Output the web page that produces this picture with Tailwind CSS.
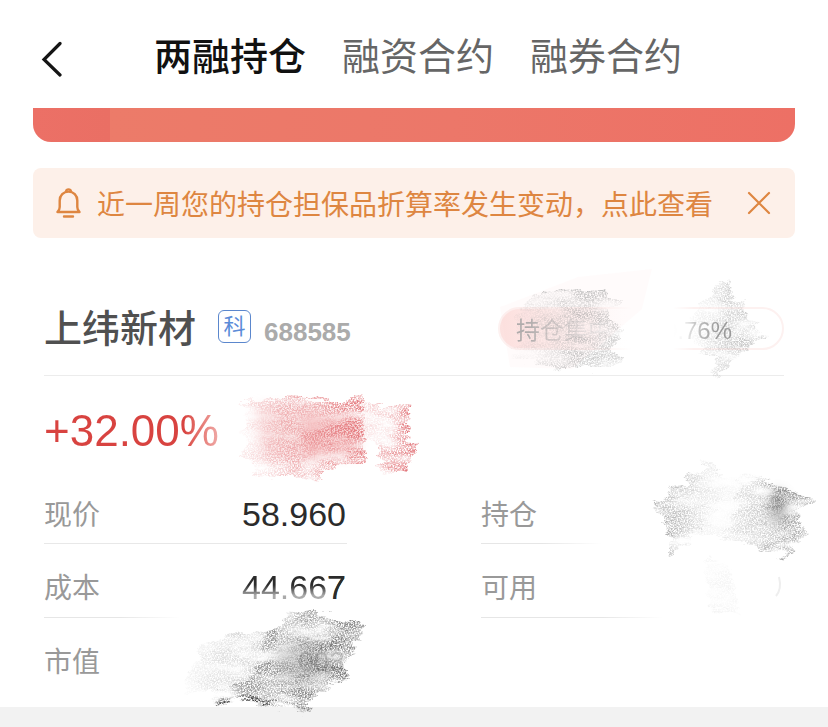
<!DOCTYPE html>
<html lang="zh-CN">
  <head>
    <meta charset="UTF-8" />
    <meta name="viewport" content="width=device-width, initial-scale=1.0" />
    <title>两融持仓</title>
    <script src="https://cdn.jsdelivr.net/npm/@tailwindcss/browser@4"></script>
  </head>
  <body
    class="min-h-screen overflow-x-hidden bg-[#f2f2f2] font-['Liberation_Sans','Noto_Sans_CJK_SC',sans-serif]"
  >
    <!-- Shared pencil texture filters -->
    <svg class="absolute h-0 w-0" aria-hidden="true">
      <defs>
        <filter id="pencil" x="-10%" y="-10%" width="120%" height="120%" color-interpolation-filters="sRGB">
          <feTurbulence type="fractalNoise" baseFrequency="0.04 0.14" numOctaves="3" seed="4" result="wave" />
          <feDisplacementMap in="SourceGraphic" in2="wave" scale="18" xChannelSelector="R" yChannelSelector="A" result="rough" />
          <feTurbulence type="fractalNoise" baseFrequency="0.7" numOctaves="2" seed="9" />
          <feColorMatrix values="0 0 0 0 0  0 0 0 0 0  0 0 0 0 0  3 0 0 0 -0.95" result="grain" />
          <feTurbulence type="fractalNoise" baseFrequency="0.03 0.08" numOctaves="3" seed="21" />
          <feColorMatrix values="0 0 0 0 0  0 0 0 0 0  0 0 0 0 0  0 2.2 0 0 -0.4" result="streak" />
          <feComposite in="rough" in2="grain" operator="in" result="dots" />
          <feComposite in="dots" in2="streak" operator="in" />
        </filter>
        <filter id="soft" x="-60%" y="-60%" width="220%" height="220%">
          <feGaussianBlur stdDeviation="6" />
        </filter>
      </defs>
    </svg>

    <main class="bg-white pb-[15px]">
      <!-- Header -->
      <header class="flex h-[108px] items-center pt-1.5 pl-[41px]">
        <button type="button" aria-label="返回" class="mt-1 shrink-0">
          <svg class="h-9 w-[22px]" viewBox="0 0 22 36" fill="none" stroke="#151515" stroke-width="3.200" stroke-linecap="round">
            <path d="M19 2.500 3 18.500 19 34" />
          </svg>
        </button>
        <nav class="ml-[91px] flex gap-9 text-[38px] leading-[50px] whitespace-nowrap text-[#666]">
          <a href="#" class="font-medium text-[#111]">两融持仓</a>
          <a href="#">融资合约</a>
          <a href="#">融券合约</a>
        </nav>
      </header>

      <!-- Bottom edge of the account card -->
      <div class="mx-[33px] flex h-[34px] overflow-hidden rounded-b-[18px]">
        <div class="w-[77px] bg-linear-to-r from-[#ec7066] to-[#ea6f64]"></div>
        <div class="flex-1 bg-linear-to-r from-[#ec7b69] via-[#ec7769] to-[#ed7065]"></div>
      </div>

      <!-- Notice -->
      <div class="mx-[33px] mt-[26px] flex h-[70px] items-center rounded-lg bg-[#fdf0e9] pr-6 pl-[23px] text-[#de8641]">
        <svg class="h-[30px] w-[26px] shrink-0" viewBox="0 0 26 30" fill="none" stroke="currentColor" stroke-width="2.400" stroke-linecap="round" stroke-linejoin="round">
          <path d="M1.500 24h22c-1.600-1.300-2.200-3-2.200-5v-6.500C21.300 7.300 17.500 3.600 12.500 3.600S3.700 7.300 3.700 12.500V19c0 2-.6 3.700-2.200 5Z" />
          <path d="M10.100 3.200c.4-2.400 4.400-2.400 4.800 0M8 28.500h9" />
        </svg>
        <a href="#" class="ml-[15px] pt-1.5 text-[28px] leading-10 whitespace-nowrap">近一周您的持仓担保品折算率发生变动，点此查看</a>
        <button type="button" aria-label="关闭" class="ml-auto">
          <svg class="size-6" viewBox="0 0 24 24" fill="none" stroke="currentColor" stroke-width="2.200" stroke-linecap="round">
            <path d="M2 2l20 20M22 2 2 22" />
          </svg>
        </button>
      </div>

      <section class="px-11">
        <!-- Stock title -->
        <div class="relative mt-11 flex h-[94px] items-center border-b border-[#ececec]">
          <h1 class="text-[38px] leading-[50px] font-medium whitespace-nowrap text-[#505050]">上纬新材</h1>
          <span class="mb-1 ml-[22px] flex size-[33px] items-center justify-center rounded-md border border-[#5b87cd] text-[22px] text-[#5b8bd8]">科</span>
          <span class="mt-1.5 ml-[13px] text-[26px] leading-8 font-bold text-[#ababab]">688585</span>
          <div class="ml-auto flex h-[43px] w-[286px] items-center justify-between rounded-full border-2 border-[#fdf1f0] bg-linear-to-r from-[#fce1df] via-white via-45% to-white pt-1 pr-[50px] pl-4 text-2xl whitespace-nowrap">
            <span class="bg-linear-to-r from-[#aaa] from-10% via-[#d4cccc] via-30% to-white to-90% bg-clip-text text-transparent">持仓集中度</span>
            <span class="bg-linear-to-r from-white from-10% to-[#999] to-80% bg-clip-text text-transparent">0.76%</span>
          </div>
          <svg class="pointer-events-none absolute -top-4 right-0 h-[120px] w-[300px]" viewBox="484 266 300 120" aria-hidden="true">
            <defs>
              <linearGradient id="pillGrey">
                <stop offset="0" stop-color="#aaa" stop-opacity=".05" />
                <stop offset=".6" stop-color="#999" stop-opacity=".55" />
                <stop offset="1" stop-color="#999" stop-opacity=".4" />
              </linearGradient>
              <linearGradient id="pillWipe">
                <stop offset="0" stop-color="#fff" stop-opacity="0" />
                <stop offset=".4" stop-color="#fff" />
                <stop offset=".8" stop-color="#fff" />
                <stop offset="1" stop-color="#fff" stop-opacity="0" />
              </linearGradient>
            </defs>
            <path d="M590 300h104v58h-104z" fill="url(#pillWipe)" />
            <path d="M578 277l74-8-10 40-70 60-62-2-10-60z" fill="#f9d0cc" opacity=".08" />
            <g filter="url(#pencil)" fill="url(#pillGrey)">
              <path d="M536 290h70l4 8 12 4-10 8 2 14 8 4-8 10v14l10 8-14 8h-50l-50-8 10-20-6-20z" />
              <path d="M688 318l38-40 9 14-3 8 14 0-2 12 16 12-4 8 14 4-30 18-26 24-4-6 8-18-24-8z" />
            </g>
            <path d="M536 292q34-4 72-2" fill="none" stroke="#bbb" stroke-width="2" filter="url(#pencil)" />
          </svg>
        </div>

        <!-- Profit rate -->
        <div class="relative pt-8">
          <p class="w-fit bg-linear-to-r from-[#d84340] from-80% to-[#efaaa8] bg-clip-text text-[44px] leading-[46px] text-transparent">+32.00%</p>
          <svg class="pointer-events-none absolute top-4 left-48 h-[96px] w-[186px]" viewBox="236 392 186 96" aria-hidden="true">
            <defs>
              <linearGradient id="redA">
                <stop offset="0" stop-color="#e88a8e" stop-opacity=".15" />
                <stop offset=".5" stop-color="#e47a7e" stop-opacity=".65" />
                <stop offset="1" stop-color="#e0656a" stop-opacity=".85" />
              </linearGradient>
              <linearGradient id="redB">
                <stop offset="0" stop-color="#e0656a" stop-opacity=".1" />
                <stop offset="1" stop-color="#dc5a60" stop-opacity=".95" />
              </linearGradient>
            </defs>
            <path d="M255 406h65v56l-60-4z" fill="#f3b8b9" opacity=".35" filter="url(#soft)" />
            <path d="M304 414h54v42h-54z" fill="#f0a0a2" opacity=".45" filter="url(#soft)" />
            <g filter="url(#pencil)">
              <path d="M242 399h122v64l-42 4v12l-74-4 6-8-12-16 6-8-8-12 8-10z" fill="url(#redA)" />
              <path d="M360 404h52l-4 14 2 14-4 6 12 2-4 14-8 4 4 14h-26l-6-10 4-20-22-2z" fill="url(#redB)" />
            </g>
          </svg>
        </div>

        <!-- Holding figures -->
        <div class="relative mt-4">
          <dl class="grid grid-cols-2 gap-x-[134px] text-[28px] leading-[42px] text-[#999]">
            <div class="flex h-[74px] justify-between border-b border-[#e8e8e8] pt-[23px]">
              <dt class="pt-0.5">现价</dt>
              <dd class="pr-px text-[34px] text-[#2b2b2b]">58.960</dd>
            </div>
            <div class="flex h-[74px] justify-between bg-linear-to-r from-[#e6e6e6] from-20% to-white to-40% bg-[length:100%_1px] bg-bottom bg-no-repeat pt-[23px]">
              <dt class="pt-0.5">持仓</dt>
              <dd></dd>
            </div>
            <div class="flex h-[74px] justify-between bg-linear-to-r from-[#e6e6e6] from-25% to-white to-45% bg-[length:100%_1px] bg-bottom bg-no-repeat pt-[22px]">
              <dt class="pt-0.5">成本</dt>
              <dd class="mr-px h-[42px] bg-linear-to-b from-[#2b2b2b] from-45% to-[#aaa] to-70% bg-clip-text text-[34px] text-transparent">44.66<span class="text-[#2b2b2b]">7</span></dd>
            </div>
            <div class="flex h-[74px] justify-between bg-linear-to-r from-[#e6e6e6] from-40% to-white to-60% bg-[length:100%_1px] bg-bottom bg-no-repeat pt-[22px]">
              <dt class="pt-0.5">可用</dt>
              <dd></dd>
            </div>
            <div class="flex h-[74px] justify-between pt-[22px]">
              <dt class="pt-0.5">市值</dt>
              <dd></dd>
            </div>
          </dl>

          <svg class="pointer-events-none absolute top-[130px] left-[126px] h-[124px] w-[210px]" viewBox="170 600 210 124" aria-hidden="true">
            <defs>
              <linearGradient id="greyB">
                <stop offset="0" stop-color="#888" stop-opacity=".1" />
                <stop offset=".5" stop-color="#777" stop-opacity=".45" />
                <stop offset="1" stop-color="#666" stop-opacity=".85" />
              </linearGradient>
            </defs>
            <ellipse cx="305" cy="662" rx="30" ry="22" fill="#777" opacity=".25" filter="url(#soft)" />
            <g filter="url(#pencil)">
              <path d="M292 611l72 12-4 14-8 4 6 6-10 12-2 10 4 12-22 4-8 10-10 4-4 14-60-12-38 4 6-12-30-4 4-20 14-8-6-14 30-12 52-6z" fill="url(#greyB)" />
              <path d="M262 632l16-2v24l20 4 10-20 36-4-4 20-12 8 18 4-2 8-24 6-8 16-6 8-54-4-40 2 20-14 20-12 12-20z" fill="#666" opacity=".5" />
              <path d="M212 702q24-6 52-2t48 10" fill="none" stroke="#444" stroke-width="4" />
            </g>
            <text x="298" y="671" font-size="28" fill="#666" opacity=".3">003</text>
          </svg>

          <svg class="pointer-events-none absolute -top-5 -right-8 h-[180px] w-[170px]" viewBox="646 450 170 180" aria-hidden="true">
            <defs>
              <linearGradient id="greyC">
                <stop offset="0" stop-color="#777" stop-opacity=".75" />
                <stop offset=".5" stop-color="#888" stop-opacity=".35" />
                <stop offset="1" stop-color="#999" stop-opacity=".05" />
              </linearGradient>
              <linearGradient id="greyD">
                <stop offset="0" stop-color="#999" stop-opacity=".08" />
                <stop offset=".4" stop-color="#888" stop-opacity=".35" />
                <stop offset=".7" stop-color="#666" stop-opacity=".8" />
                <stop offset="1" stop-color="#888" stop-opacity=".6" />
              </linearGradient>
            </defs>
            <ellipse cx="778" cy="508" rx="9" ry="18" fill="#777" opacity=".45" filter="url(#soft)" />
            <g filter="url(#pencil)">
              <path d="M652 500l16 2-2-14 22-4 2-14 16 4-6-16 28 24-20 40-14 12-8 10-10 6-6 8-4-36z" fill="url(#greyC)" />
              <path d="M706 470l22 8 30-2v60l-36 0-26 0z" fill="#999" opacity=".1" />
              <path d="M740 478l18 0 52 20-4 8-6 4-2 16 10 2-4 10-8 8-4 12-70-20 12-20z" fill="url(#greyD)" />
              <path d="M706 558l18 4 6 14 10 40-30-8z" fill="#aaa" opacity=".12" />
            </g>
            <path d="M779 577q3 12-3 19" fill="none" stroke="#eee" stroke-width="2" />
          </svg>
        </div>
      </section>
    </main>
  </body>
</html>
